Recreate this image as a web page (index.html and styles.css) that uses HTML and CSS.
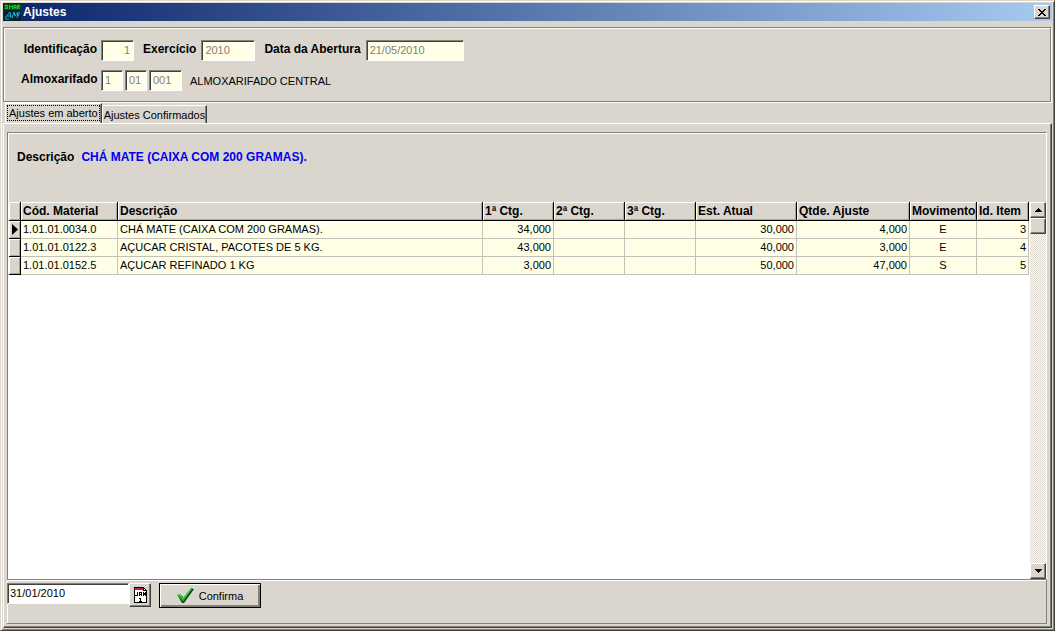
FILE: index.html
```html
<!DOCTYPE html>
<html lang="pt-BR">
<head>
<meta charset="utf-8">
<title>Ajustes</title>
<link rel="stylesheet" href="styles.css">
</head>
<body>
<main class="window">
  <header class="titlebar">
    <svg class="app-icon" width="17" height="17" viewBox="0 0 17 17" aria-hidden="true">
      <rect width="17" height="17" fill="#06203a"/>
      <rect width="17" height="6" fill="#064a12"/>
      <path d="M4 1.500H1.500V3H3.500V4.500H1M5.500 5V1.500L7 3L8.500 1.500V5M10 5V1.500H12V5M10 3.500H12M13.500 5V1.500H15.500V3H13.500L15.500 5" fill="none" stroke="#12d52c"/>
      <path d="M1 14L6 8L7 14M3 12H7M8 14L10 8L11 12L14 8L13 14M14 12L16 8M1 15H5" fill="none" stroke="#22b4bd"/>
    </svg>
    <h1 class="title">Ajustes</h1>
    <button class="close" type="button" aria-label="Fechar">
      <svg width="8" height="7" viewBox="0 0 8 7" shape-rendering="crispEdges" aria-hidden="true"><path d="M0 0h2v1h1v1h2v-1h1v-1h2v1h-1v1h-1v1h-1v1h1v1h1v1h1v1h-2v-1h-1v-1h-2v1h-1v1h-2v-1h1v-1h1v-1h1v-1h-1v-1h-1v-1h-1z"/></svg>
    </button>
  </header>

  <section class="summary">
    <div class="line">
      <label class="label first" for="ident">Identificação</label>
      <input class="field w-ident right" id="ident" value="1" disabled>
      <label class="label next" for="exerc">Exercício</label>
      <input class="field w-year" id="exerc" value="2010" disabled>
      <label class="label next" for="abertura">Data da Abertura</label>
      <input class="field w-date" id="abertura" value="21/05/2010" disabled>
    </div>
    <div class="line">
      <label class="label first" for="almox">Almoxarifado</label>
      <input class="field w-code" id="almox" value="1" disabled>
      <input class="field w-code" value="01" aria-label="Almoxarifado, grupo" disabled>
      <input class="field w-ident" value="001" aria-label="Almoxarifado, unidade" disabled>
      <span class="store">ALMOXARIFADO CENTRAL</span>
    </div>
  </section>

  <nav class="tabs" role="tablist">
    <button class="tab active" type="button" role="tab" aria-selected="true"><span class="tab-text">Ajustes em aberto</span></button>
    <button class="tab" type="button" role="tab" aria-selected="false"><span class="tab-text">Ajustes Confirmados</span></button>
  </nav>

  <section class="page">
    <div class="panel">
      <div class="current">
        <span class="label">Descrição</span>
        <strong class="material">CHÁ MATE (CAIXA COM 200 GRAMAS).</strong>
      </div>
      <div class="grid">
        <div class="grid-body">
          <table class="items">
            <colgroup>
              <col class="c-mark"><col class="c-code"><col><col class="c-ctg"><col class="c-ctg"><col class="c-ctg"><col class="c-stock"><col class="c-qty"><col class="c-move"><col class="c-id">
            </colgroup>
            <thead>
              <tr><td class="mark"></td><th>Cód. Material</th><th>Descrição</th><th>1ª Ctg.</th><th>2ª Ctg.</th><th>3ª Ctg.</th><th>Est. Atual</th><th>Qtde. Ajuste</th><th>Movimento</th><th>Id. Item</th></tr>
            </thead>
            <tbody>
              <tr><td class="mark"><svg class="pointer" width="6" height="11" viewBox="0 0 6 11" aria-hidden="true"><path d="M0 0L6 5.500L0 11Z"/></svg></td><td>1.01.01.0034.0</td><td>CHÁ MATE (CAIXA COM 200 GRAMAS).</td><td class="num">34,000</td><td></td><td></td><td class="num">30,000</td><td class="num">4,000</td><td class="mid">E</td><td class="num">3</td></tr>
              <tr><td class="mark"></td><td>1.01.01.0122.3</td><td>AÇUCAR CRISTAL, PACOTES DE 5 KG.</td><td class="num">43,000</td><td></td><td></td><td class="num">40,000</td><td class="num">3,000</td><td class="mid">E</td><td class="num">4</td></tr>
              <tr><td class="mark"></td><td>1.01.01.0152.5</td><td>AÇUCAR REFINADO 1 KG</td><td class="num">3,000</td><td></td><td></td><td class="num">50,000</td><td class="num">47,000</td><td class="mid">S</td><td class="num">5</td></tr>
            </tbody>
          </table>
        </div>
        <div class="scrollbar">
          <button class="scroll-part" type="button" aria-label="Rolar para cima"><svg width="7" height="4" viewBox="0 0 7 4" shape-rendering="crispEdges" aria-hidden="true"><path d="M3 0h1v1h1v1h1v1h1v1h-7v-1h1v-1h1v-1h1z"/></svg></button>
          <div class="scroll-part thumb"></div>
          <button class="scroll-part down" type="button" aria-label="Rolar para baixo"><svg width="7" height="4" viewBox="0 0 7 4" shape-rendering="crispEdges" aria-hidden="true"><path d="M0 0h7v1h-1v1h-1v1h-1v1h-1v-1h-1v-1h-1v-1h-1z"/></svg></button>
        </div>
      </div>
    </div>
    <form class="actions">
      <input class="date" value="31/01/2010" aria-label="Data de confirmação">
      <button class="calendar" type="button" aria-label="Calendário">
        <svg width="13" height="16" viewBox="0 0 13 16" shape-rendering="crispEdges" aria-hidden="true">
          <path d="M0 0h10v1h1v1h1v1h1v13H0z"/>
          <path d="M1 1h8v3h3v11H1z" fill="#fff"/>
          <path d="M1 1h8v2H1z" fill="#c02050"/>
          <path d="M10 2h1v1h-1z" fill="#fff"/>
          <path d="M3 5h1v4H1V8h2zM5 5h3v4H7V8H6v1H5zM9 5h1v1h1V5h1v4h-1V8h-1v1H9zM6 11h1v3h1v1H5v-1h1v-2H5v-1z"/>
          <path d="M6 6h1v1H6z" fill="#fff"/>
        </svg>
      </button>
      <button class="confirm" type="button">
        <svg width="17" height="15" viewBox="0 0 17 15" aria-hidden="true">
          <path d="M1 8L4 7L7 10L14 1H17L7 15H5Z" fill="#063c12"/>
          <path d="M0 7L3 6L6 10L14 0H16L6 14Z" fill="#16a622"/>
          <path d="M1 7L3 7L6 11L14 1" fill="none" stroke="#50da54"/>
        </svg>
        <span>Confirma</span>
      </button>
    </form>
  </section>
</main>
</body>
</html>
```
FILE: styles.css
```css
:root {
  --face: #dad6ce;
  --shade: #848078;
  --dark: #404040;
  --cream: #ffffe8;
}

* {
  box-sizing: border-box;
}

body {
  margin: 0;
  background: var(--face);
  color: #000;
  font: 11px/14px "Liberation Sans", Arial, sans-serif;
}

button,
input {
  margin: 0;
  color: inherit;
  font: inherit;
  border-radius: 0;
}

.window {
  display: flex;
  flex-direction: column;
  min-height: 100vh;
  padding: 2px 2px 1px;
  border: 1px solid var(--dark);
  border-top-color: var(--face);
  border-left-color: var(--face);
  box-shadow: inset 1px 1px 0 #fff, inset -1px -1px 0 var(--shade);
}

.titlebar {
  display: flex;
  align-items: center;
  height: 18px;
  padding-right: 2px;
  background: linear-gradient(to right, #0a246a, #a6caf0);
}

.app-icon {
  margin-left: 1px;
}

.title {
  flex: 1;
  margin: 0;
  padding-left: 2px;
  color: #fff;
  font-size: 12px;
  line-height: 18px;
}

.close,
.scroll-part,
.calendar,
.confirm {
  display: flex;
  align-items: center;
  justify-content: center;
  padding: 0;
  background: var(--face);
  border: 1px solid;
  border-color: #fff var(--dark) var(--dark) #fff;
  box-shadow: inset -1px -1px 0 var(--shade);
}

.close {
  width: 16px;
  height: 14px;
}

.summary {
  display: flex;
  flex-direction: column;
  gap: 9px;
  margin: 6px 1px 0 0;
  padding: 12px 17px 9px;
  border: 1px solid var(--shade);
  box-shadow: 1px 1px 0 #fff, inset 1px 1px 0 #fff;
}

.line {
  display: flex;
  align-items: flex-start;
  gap: 2px;
}

.label {
  font-size: 12px;
  font-weight: bold;
  line-height: 18px;
}

.first {
  width: 78px;
  text-align: right;
  padding-right: 2px;
}

.next {
  padding: 0 3px 0 7px;
}

.field,
.date {
  height: 21px;
  padding: 0 2px 1px;
  border: 1px solid;
  border-color: var(--shade) #fff #fff var(--shade);
  box-shadow: inset 1px 1px 0 var(--dark);
  background: var(--cream);
}

.field {
  padding: 0 3px 1px;
  color: #848078;
}

.right {
  text-align: right;
}

.w-ident { width: 33px; }
.w-year { width: 54px; }
.w-date { width: 98px; }
.w-code { width: 22px; }

.store {
  padding-left: 6px;
  line-height: 22px;
}

.tabs {
  display: flex;
  align-items: flex-end;
  padding: 1px 0 0 2px;
}

.tab {
  height: 18px;
  padding: 0 1px;
  background: var(--face);
  border: 1px solid;
  border-color: #fff var(--dark) transparent #fff;
  border-bottom: 0;
  box-shadow: inset -1px 0 0 var(--shade);
}

.active {
  height: 20px;
  padding: 0 1px 2px;
}

.active .tab-text {
  display: block;
  padding: 0 1px;
  border: 1px dotted #000;
}

.page {
  flex: 1;
  display: flex;
  flex-direction: column;
  margin-bottom: 1px;
  padding: 8px 4px 3px 3px;
  border: 1px solid;
  border-color: #fff var(--dark) var(--dark) #fff;
  box-shadow: inset -1px -1px 0 var(--shade);
}

.panel {
  flex: 1;
  display: flex;
  flex-direction: column;
  border: 1px solid var(--shade);
  border-right-color: #fff;
  border-bottom-color: var(--shade);
  box-shadow: inset 1px 1px 0 #fff;
}

.current {
  display: flex;
  gap: 7px;
  height: 69px;
  padding: 15px 9px;
}

.material {
  color: #0000f0;
  font-size: 12px;
  line-height: 18px;
}

.grid {
  flex: 1;
  display: flex;
  gap: 1px;
  margin-left: 1px;
  background: #fff;
}

.grid-body {
  flex: 1;
}

.items {
  width: 100%;
  table-layout: fixed;
  border-collapse: separate;
  border-spacing: 0;
}

.c-mark { width: 12px; }
.c-code { width: 97px; }
.c-ctg { width: 71px; }
.c-stock { width: 101px; }
.c-qty { width: 113px; }
.c-move { width: 67px; }
.c-id { width: 52px; }

.items th,
.items td {
  height: 18px;
  padding: 0 2px;
  line-height: 17px;
  white-space: nowrap;
  text-align: left;
  border: solid #c4c2b8;
  border-width: 0 1px 1px 0;
  background: var(--cream);
}

.items thead th,
.items .mark {
  font-size: 12px;
  background: var(--face);
  border-color: #000;
  box-shadow: inset 1px 1px 0 #fff, inset -1px -1px 0 #a8a49c;
}

.items thead th,
.items thead .mark {
  height: 19px;
  line-height: 18px;
}

.items .num {
  text-align: right;
}

.items .mid {
  text-align: center;
}

.pointer {
  display: block;
  margin: 0 auto;
}

.scrollbar {
  display: flex;
  flex-direction: column;
  width: 16px;
  background: repeating-conic-gradient(#fff 0 25%, var(--face) 0 50%) 0 0 / 2px 2px;
}

.scroll-part {
  width: 16px;
  height: 16px;
}

.down {
  margin-top: auto;
}

.actions {
  display: flex;
  align-items: flex-start;
  min-height: 44px;
  padding-top: 3px;
  border: solid var(--shade);
  border-width: 0 1px 1px 0;
  box-shadow: inset 1px 1px 0 #fff;
}

.date {
  width: 122px;
  background: #fff;
}

.calendar {
  width: 22px;
  height: 24px;
}

.confirm {
  gap: 5px;
  width: 102px;
  height: 25px;
  margin-left: 8px;
  border-color: #000;
  box-shadow: inset 1px 1px 0 #fff, inset -2px -2px 0 var(--shade);
}
```
